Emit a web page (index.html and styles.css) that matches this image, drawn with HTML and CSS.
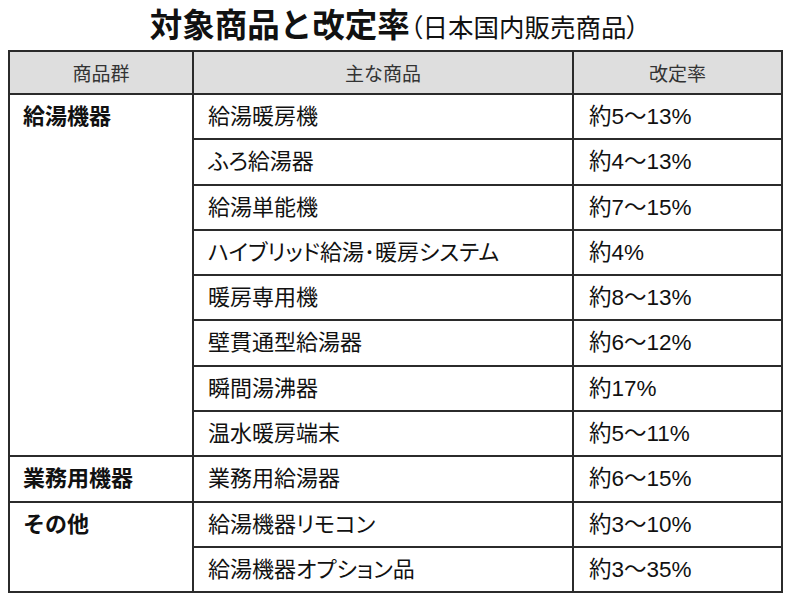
FILE: index.html
```html
<!DOCTYPE html>
<html lang="ja">
<head>
<meta charset="utf-8">
<link rel="stylesheet" href="styles.css">
</head>
<body>
<h1 class="title"><span class="title-main">対象商品と改定率</span><span class="title-sub"><span class="paren">（</span>日本国内販売商品<span class="paren">）</span></span></h1>
<table class="rates">
  <colgroup>
    <col class="c1"><col class="c2"><col class="c3">
  </colgroup>
  <thead>
    <tr><th>商品群</th><th>主な商品</th><th>改定率</th></tr>
  </thead>
  <tbody>
    <tr><td class="group" rowspan="8">給湯機器</td><td class="item">給湯暖房機</td><td class="rate">約5～13%</td></tr>
    <tr><td class="item">ふろ給湯器</td><td class="rate">約4～13%</td></tr>
    <tr><td class="item">給湯単能機</td><td class="rate">約7～15%</td></tr>
    <tr><td class="item">ハイブリッド給湯･暖房システム</td><td class="rate">約4%</td></tr>
    <tr><td class="item">暖房専用機</td><td class="rate">約8～13%</td></tr>
    <tr><td class="item">壁貫通型給湯器</td><td class="rate">約6～12%</td></tr>
    <tr><td class="item">瞬間湯沸器</td><td class="rate">約17%</td></tr>
    <tr><td class="item">温水暖房端末</td><td class="rate">約5～11%</td></tr>
    <tr><td class="group">業務用機器</td><td class="item">業務用給湯器</td><td class="rate">約6～15%</td></tr>
    <tr><td class="group" rowspan="2">その他</td><td class="item">給湯機器リモコン</td><td class="rate">約3～10%</td></tr>
    <tr><td class="item">給湯機器オプション品</td><td class="rate">約3～35%</td></tr>
  </tbody>
</table>
</body>
</html>
```

FILE: styles.css
```css
html, body {
  margin: 0;
  padding: 0;
  background: #ffffff;
}

body {
  font-family: "Liberation Sans", "Noto Sans CJK JP", sans-serif;
  color: #111111;
  width: 789px;
}

.title {
  margin: 0;
  height: 50px;
  line-height: 46px;
  padding-bottom: 4px;
  box-sizing: border-box;
  text-align: center;
  font-weight: normal;
  font-family: "Noto Sans CJK JP", sans-serif;
  color: #111111;
  white-space: nowrap;
}

.title-main {
  font-size: 32.5px;
  font-weight: 700;
}

.title-sub {
  font-size: 25.5px;
  font-weight: 400;
}

.paren {
  font-feature-settings: "palt";
}

.rates {
  margin-left: 8px;
  width: 773px;
  border-collapse: collapse;
  table-layout: fixed;
}

.c1 { width: 184px; }
.c2 { width: 380px; }
.c3 { width: 209px; }

.rates th,
.rates td {
  border: 2px solid #2b2b2b;
  padding: 0;
}

.rates th {
  height: 41px;
  background: #dedede;
  font-size: 19px;
  font-weight: 400;
  color: #333333;
  text-align: center;
  vertical-align: middle;
}

.rates tbody tr {
  height: 45.3px;
}

.rates td {
  font-size: 22px;
  text-align: left;
  line-height: 43px;
  vertical-align: top;
}

.group {
  padding-left: 13px !important;
  font-weight: 700;
}

.item {
  padding-left: 14px !important;
  font-feature-settings: "palt";
}

.rate {
  padding-left: 15px !important;
  font-size: 22.5px !important;
}
```
